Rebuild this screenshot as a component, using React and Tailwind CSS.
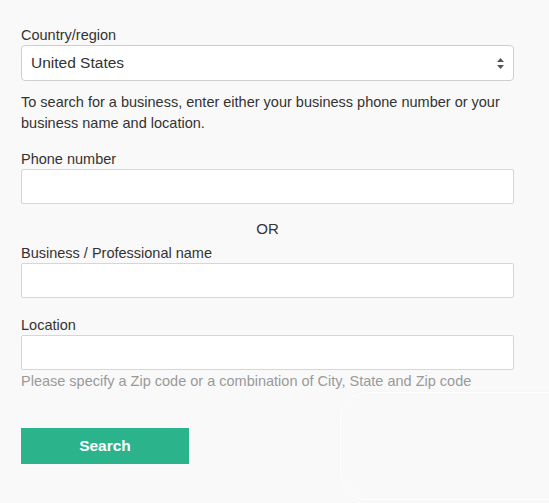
import React from 'react';

const Label = ({ children, className = '' }) => (
  <div className={`h-5 text-[14.5px] leading-5 text-[#333] ${className}`}>{children}</div>
);

const TextInput = () => (
  <input
    type="text"
    className="block h-[35px] w-full rounded-[2px] border border-[#d6d6d6] bg-white px-2.5 text-[15px] outline-none"
  />
);

export default function App() {
  return (
    <div
      className="relative h-[503px] w-[549px] overflow-hidden bg-[#f9f9f9] pl-[21px] pt-[25px]"
      style={{ fontFamily: '"Liberation Sans", Arial, sans-serif' }}
    >
      {/* faint card edge in the corner */}
      <div className="pointer-events-none absolute left-[340px] top-[392px] h-[108px] w-[240px] rounded-[26px] border border-white shadow-[0_0_3px_rgba(0,0,0,0.03)]" />

      <form className="relative w-[493px]" onSubmit={(e) => e.preventDefault()}>
        <Label>Country/region</Label>
        <div className="relative h-[36px] w-full rounded-[4px] border border-[#cfcfcf] bg-white">
          <div className="flex h-full items-center pl-[9px] text-[15.5px] text-[#333]">United States</div>
          <svg className="absolute right-[9px] top-[12px]" width="7" height="11" viewBox="0 0 7 11">
            <path d="M3.5 0 L7 4 L0 4 Z" fill="#555" />
            <path d="M0 7 L7 7 L3.5 11 Z" fill="#555" />
          </svg>
        </div>

        <p className="mt-[11px] text-[14.5px] leading-[21px] text-[#333]">
          To search for a business, enter either your business phone number or your business name and location.
        </p>

        <Label className="mt-[15px]">Phone number</Label>
        <TextInput />

        <div className="mt-[15px] h-5 text-center text-[15px] leading-5 text-[#333]">OR</div>

        <Label className="mt-[4px]">Business / Professional name</Label>
        <TextInput />

        <Label className="mt-[17px]">Location</Label>
        <TextInput />
        <div className="mt-px h-5 text-[14.5px] leading-5 text-[#999]">
          Please specify a Zip code or a combination of City, State and Zip code
        </div>

        <button
          type="submit"
          className="mt-[37px] h-[36px] w-[168px] bg-[#2bb38c] text-[15.5px] font-bold text-white"
        >
          Search
        </button>
      </form>
    </div>
  );
}
